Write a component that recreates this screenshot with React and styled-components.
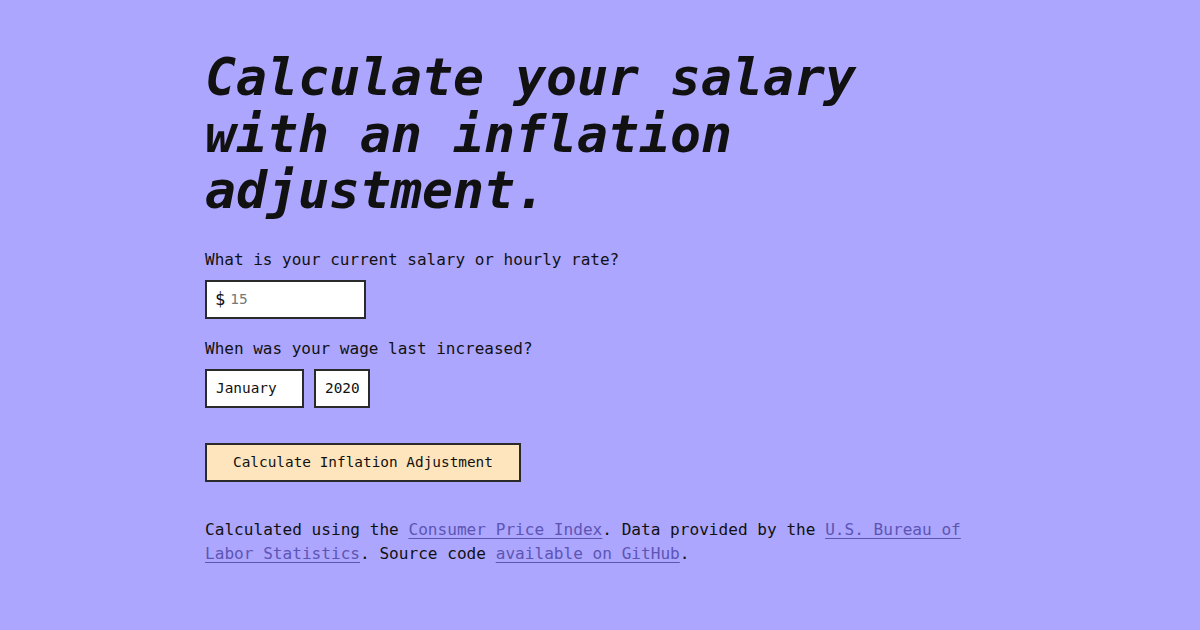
import React, { useState } from "react";
import styled, { createGlobalStyle } from "styled-components";

const GlobalStyle = createGlobalStyle`
  html, body {
    margin: 0;
    padding: 0;
    background: #aca6ff;
  }
  body {
    font-family: "DejaVu Sans Mono", "Liberation Mono", monospace;
    color: #111;
  }
`;

const Page = styled.main`
  width: 790px;
  margin: 0 auto;
  padding-top: 49px;
`;

const Title = styled.h1`
  margin: 0 0 29px;
  font-size: 51.5px;
  line-height: 56.5px;
  font-weight: 700;
  font-style: italic;
  letter-spacing: 0;
`;

const Field = styled.div`
  display: flex;
  flex-direction: column;
  margin-bottom: 18px;
`;

const Label = styled.label`
  font-size: 16px;
  line-height: 24px;
  margin-bottom: 8px;
`;

const MoneyBox = styled.div`
  display: flex;
  align-items: center;
  width: 161px;
  height: 39px;
  box-sizing: border-box;
  border: 2px solid #2a2a2a;
  background: #fff;
  padding: 0 8px;

  span {
    font-size: 17px;
    margin-right: 5px;
  }
`;

const MoneyInput = styled.input`
  border: 0;
  outline: 0;
  width: 100%;
  font-family: inherit;
  font-size: 14.4px;
  background: transparent;
  padding: 0;

  &::placeholder {
    color: #777;
  }
`;

const Row = styled.div`
  display: flex;
  gap: 10px;
`;

const Select = styled.select`
  appearance: none;
  -webkit-appearance: none;
  height: 39px;
  width: ${(p) => p.$width};
  box-sizing: border-box;
  border: 2px solid #2a2a2a;
  border-radius: 0;
  background: #fff;
  color: #111;
  font-family: inherit;
  font-size: 14.4px;
  padding: 0 9px;
`;

const Button = styled.button`
  margin-top: 17px;
  width: 316px;
  height: 39px;
  box-sizing: border-box;
  border: 2px solid #2a2a2a;
  border-radius: 0;
  background: #ffe5bd;
  color: #111;
  font-family: inherit;
  font-size: 14.4px;
  cursor: pointer;
`;

const Footer = styled.p`
  margin: 36px 0 0;
  font-size: 16.1px;
  line-height: 24px;

  a {
    color: #5d55b3;
    text-decoration: underline;
    text-underline-offset: 3px;
  }
`;

const months = [
  "January", "February", "March", "April", "May", "June",
  "July", "August", "September", "October", "November", "December",
];

const App = () => {
  const [salary, setSalary] = useState("");
  const [month, setMonth] = useState("January");
  const [year, setYear] = useState("2020");

  return (
    <>
      <GlobalStyle />
      <Page>
        <Title>
          Calculate your salary
          <br />
          with an inflation
          <br />
          adjustment.
        </Title>

        <Field>
          <Label htmlFor="salary">What is your current salary or hourly rate?</Label>
          <MoneyBox>
            <span>$</span>
            <MoneyInput
              id="salary"
              placeholder="15"
              value={salary}
              onChange={(e) => setSalary(e.target.value)}
            />
          </MoneyBox>
        </Field>

        <Field>
          <Label>When was your wage last increased?</Label>
          <Row>
            <Select $width="99px" value={month} onChange={(e) => setMonth(e.target.value)}>
              {months.map((m) => (
                <option key={m}>{m}</option>
              ))}
            </Select>
            <Select $width="56px" value={year} onChange={(e) => setYear(e.target.value)}>
              {["2020", "2021", "2022", "2023"].map((y) => (
                <option key={y}>{y}</option>
              ))}
            </Select>
          </Row>
        </Field>

        <Button>Calculate Inflation Adjustment</Button>

        <Footer>
          Calculated using the <a href="#">Consumer Price Index</a>. Data provided by the{" "}
          <a href="#">U.S. Bureau of Labor Statistics</a>. Source code{" "}
          <a href="#">available on GitHub</a>.
        </Footer>
      </Page>
    </>
  );
};

export default App;
